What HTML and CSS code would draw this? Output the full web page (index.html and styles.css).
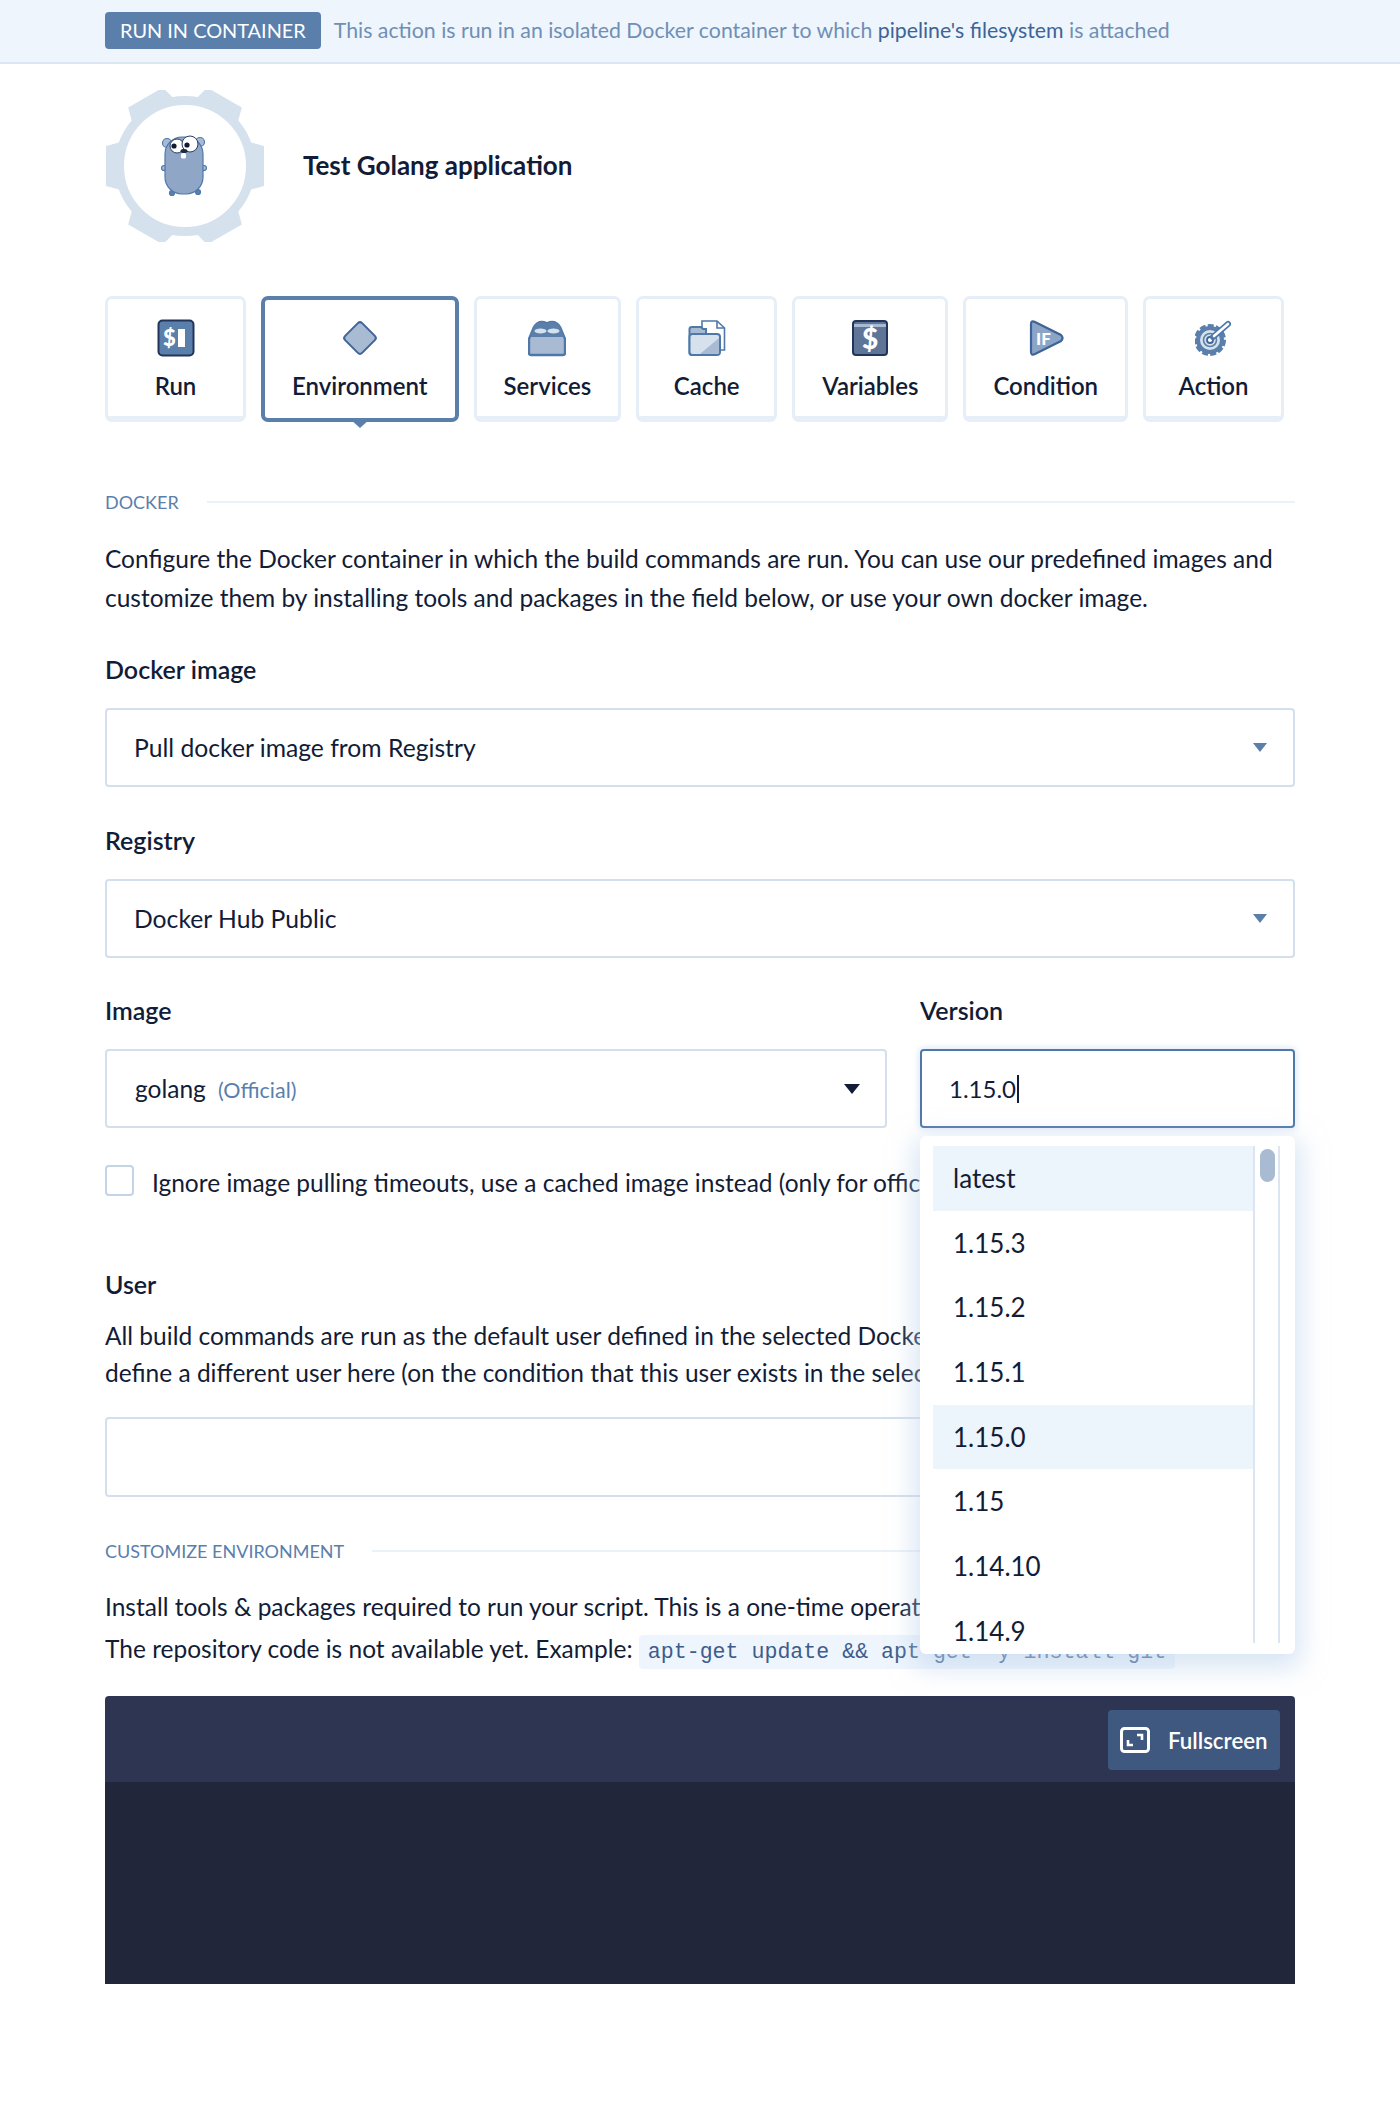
FILE: index.html
```html
<!DOCTYPE html>
<html lang="en">
<head>
<meta charset="utf-8">
<title>Test Golang application</title>
<link rel="stylesheet" href="styles.css">
</head>
<body>
<div class="notice">
  <span class="badge">RUN IN CONTAINER</span>
  <span class="notice-text">This action is run in an isolated Docker container to which <strong>pipeline's filesystem</strong> is attached</span>
</div>
<main class="page">
  <header class="head">
    <svg class="gear" viewBox="-80 -76 160 152" width="160" height="152" aria-hidden="true">
      <circle r="65.5" fill="none" stroke="#d5e1ed" stroke-width="9"/>
      <g fill="#d5e1ed">
        <polygon points="64,-24 79,-20 79,20 64,24"/>
        <polygon points="64,-24 79,-20 79,20 64,24" transform="rotate(60)"/>
        <polygon points="64,-24 79,-20 79,20 64,24" transform="rotate(120)"/>
        <polygon points="64,-24 79,-20 79,20 64,24" transform="rotate(180)"/>
        <polygon points="64,-24 79,-20 79,20 64,24" transform="rotate(240)"/>
        <polygon points="64,-24 79,-20 79,20 64,24" transform="rotate(300)"/>
      </g>
      <g stroke="#4f78aa" stroke-width="1.2">
        <circle cx="-18" cy="-23" r="4.5" fill="#a9bbd3"/>
        <circle cx="15" cy="-24" r="4.5" fill="#a9bbd3"/>
        <circle cx="-21" cy="2" r="2.5" fill="#a9bbd3"/>
        <circle cx="19" cy="2" r="2.5" fill="#a9bbd3"/>
        <circle cx="-13" cy="27" r="2.5" fill="#5a7fab"/>
        <circle cx="13" cy="26" r="2.5" fill="#5a7fab"/>
        <rect x="-20" y="-29" width="38" height="57" rx="17" fill="#8fa6c6"/>
      </g>
      <circle cx="-8" cy="-20" r="7" fill="#fff" stroke="#2b3d60" stroke-width="1"/>
      <circle cx="5" cy="-22" r="8" fill="#fff" stroke="#2b3d60" stroke-width="1"/>
      <circle cx="-11" cy="-20" r="2.6" fill="#0f1a30"/>
      <circle cx="2" cy="-21" r="2.6" fill="#0f1a30"/>
      <ellipse cx="-1" cy="-15" rx="3.5" ry="2" fill="#1c2a44"/>
      <rect x="-4" y="-13" width="5" height="5.5" rx="1.5" fill="#fff"/>
    </svg>
    <h1 class="title">Test Golang application</h1>
  </header>

  <nav class="tabs">
    <div class="tab">
      <svg class="tab-icon" viewBox="0 0 38 38" aria-hidden="true">
        <rect x="1.5" y="1.5" width="35" height="35" rx="4" fill="#5a7fab" stroke="#22345a" stroke-width="2"/>
        <text x="12.5" y="26.5" class="ico-t ico-dollar">$</text>
        <rect x="21" y="10" width="7" height="18" fill="#fff"/>
      </svg>
      <span>Run</span>
    </div>
    <div class="tab tab-active">
      <svg class="tab-icon" viewBox="0 0 38 38" aria-hidden="true">
        <rect x="7" y="7" width="24" height="24" rx="3" transform="rotate(45 19 19)" fill="#a9bbd3" stroke="#3f6497" stroke-width="2"/>
      </svg>
      <span>Environment</span>
    </div>
    <div class="tab">
      <svg class="tab-icon" viewBox="0 0 38 38" aria-hidden="true">
        <path d="M3 36 H35 Q37 36 37 34 V20 L32 8 Q29 3 24 3 Q20 3 19 5 Q18 3 14 3 Q9 3 6 8 L1 20 V34 Q1 36 3 36 Z" fill="#a9bbd3" stroke="#4f78aa" stroke-width="2.4"/>
        <path d="M2 18 L6 8 Q9 3 14 3 Q18 3 19 5 Q20 3 24 3 Q29 3 32 8 L36 18 Z" fill="#5a7fab"/>
        <ellipse cx="12.5" cy="12" rx="6" ry="2.6" fill="#d5e1ed"/>
        <ellipse cx="25.5" cy="12" rx="6" ry="2.6" fill="#d5e1ed"/>
      </svg>
      <span>Services</span>
    </div>
    <div class="tab">
      <svg class="tab-icon" viewBox="0 0 38 38" aria-hidden="true">
        <path d="M14 2 H29 L36.5 9 V31 H14 Z" fill="#fff" stroke="#4f78aa" stroke-width="1.6"/>
        <path d="M29 2 V9 H36.5" fill="none" stroke="#4f78aa" stroke-width="1.6"/>
        <path d="M1.5 10 Q1.5 8 4 8 H13 L15 10 H18 V36 H4 Q1.5 36 1.5 34 Z" fill="#a9bbd3" stroke="#4f78aa" stroke-width="2"/>
        <path d="M1.5 18 Q1.5 15 4.5 15 H29 Q32 15 32 18 V33 Q32 36 29 36 H4.5 Q1.5 36 1.5 33 Z" fill="#d5e1ed" stroke="#4f78aa" stroke-width="2"/>
        <path d="M12 35 L31 19 V33 Q31 35 29 35 Z" fill="#a9bbd3"/>
      </svg>
      <span>Cache</span>
    </div>
    <div class="tab">
      <svg class="tab-icon" viewBox="0 0 38 38" aria-hidden="true">
        <rect x="2" y="2" width="34" height="34" rx="3" fill="#5f7598" stroke="#22345a" stroke-width="2"/>
        <rect x="3" y="5" width="32" height="3" fill="#a9bbd3"/>
        <text x="19" y="30" class="ico-t ico-var">$</text>
      </svg>
      <span>Variables</span>
    </div>
    <div class="tab">
      <svg class="tab-icon" viewBox="0 0 38 38" aria-hidden="true">
        <path d="M4 5 Q4 1 8 3 L34 16 Q37 19 34 22 L8 35 Q4 37 4 33 Z" fill="#8ba5c7" stroke="#3f6497" stroke-width="2.2"/>
        <text x="9" y="25.5" class="ico-t ico-if">IF</text>
      </svg>
      <span>Condition</span>
    </div>
    <div class="tab">
      <svg class="tab-icon" viewBox="0 0 38 38" aria-hidden="true">
        <circle cx="15" cy="21" r="12" fill="#d5e1ed" stroke="#5a7fab" stroke-width="4"/>
        <circle cx="15" cy="21" r="14.5" fill="none" stroke="#5a7fab" stroke-width="3" stroke-dasharray="6 2.2"/>
        <circle cx="15" cy="21" r="6.5" fill="none" stroke="#5a7fab" stroke-width="1.6"/>
        <circle cx="15" cy="21" r="3" fill="#fff" stroke="#3f6497" stroke-width="1.8"/>
        <path d="M18 18 L33 5" stroke="#4f78aa" stroke-width="6" stroke-linecap="round"/>
        <path d="M19 17 L33 5" stroke="#fff" stroke-width="2.6" stroke-linecap="round"/>
      </svg>
      <span>Action</span>
    </div>
  </nav>

  <h2 class="section section-docker"><span>DOCKER</span></h2>
  <p class="text text-docker">Configure the Docker container in which the build commands are run. You can use our predefined images and<br>customize them by installing tools and packages in the field below, or use your own docker image.</p>

  <div class="label label-first">Docker image</div>
  <div class="field select"><span>Pull docker image from Registry</span><i class="caret"></i></div>

  <div class="label">Registry</div>
  <div class="field select"><span>Docker Hub Public</span><i class="caret"></i></div>

  <div class="split">
    <div class="split-main">
      <div class="label label-row">Image</div>
      <div class="field select image"><span>golang <em class="official">(Official)</em></span><i class="caret caret-dark"></i></div>
    </div>
    <div class="split-side">
      <div class="label label-row">Version</div>
      <div class="field version"><span>1.15.0</span><b class="cursor"></b></div>
      <div class="menu">
        <div class="menu-inner">
          <ul class="options">
            <li class="hl">latest</li>
            <li>1.15.3</li>
            <li>1.15.2</li>
            <li>1.15.1</li>
            <li class="hl">1.15.0</li>
            <li>1.15</li>
            <li>1.14.10</li>
            <li>1.14.9</li>
          </ul>
          <div class="track"><div class="thumb"></div></div>
        </div>
      </div>
    </div>
  </div>

  <label class="check"><span class="box"></span><span class="check-text">Ignore image pulling timeouts, use a cached image instead (only for official images)</span></label>

  <div class="label label-user">User</div>
  <p class="text text-user">All build commands are run as the default user defined in the selected Docker image. You can<br>define a different user here (on the condition that this user exists in the selected image).</p>
  <div class="field field-user"></div>

  <h2 class="section section-env"><span>CUSTOMIZE ENVIRONMENT</span></h2>
  <p class="text text-env">Install tools &amp; packages required to run your script. This is a one-time operation.</p>
  <p class="text text-env2">The repository code is not available yet. Example: <code class="code">apt-get update &amp;&amp; apt-get -y install git</code></p>

  <div class="editor">
    <div class="editor-head">
      <button class="full" type="button">
        <svg viewBox="0 0 30 26" width="30" height="26" aria-hidden="true">
          <rect x="1.5" y="1.5" width="27" height="23" rx="3" fill="none" stroke="#fff" stroke-width="3"/>
          <path d="M8 13 V18 H13 M22 13 V8 H17" fill="none" stroke="#fff" stroke-width="2.6"/>
        </svg>
        <span>Fullscreen</span>
      </button>
    </div>
    <div class="editor-body"></div>
  </div>
</main>
</body>
</html>
```

FILE: styles.css
```css
* { box-sizing: border-box; }
html, body { margin: 0; padding: 0; background: #fff; }
body {
  font-family: "Lato", "Liberation Sans", sans-serif;
  color: #121c36;
  font-size: 24.5px;
  height: 2117px;
  overflow: hidden;
}
.notice {
  height: 64px;
  display: flex;
  align-items: center;
  gap: 13px;
  padding: 0 105px 2px;
  background: #eef5fc;
  border-bottom: 2px solid #dbe6f2;
}
.badge {
  display: block;
  background: #5a7fab;
  color: #fff;
  font-size: 19.9px;
  line-height: 37px;
  padding: 0 15px;
  border-radius: 4px;
  white-space: nowrap;
}
.notice-text { color: #6f8fb6; font-size: 21.3px; white-space: nowrap; }
.notice-text strong { font-weight: 400; color: #3d6498; }
.page { padding: 0 105px; }
.head { display: flex; align-items: center; gap: 38px; padding-top: 26px; }
.gear { display: block; flex: none; }
.title { margin: 0; font-size: 26px; font-weight: 700; line-height: 32px; position: relative; top: -1px; }
.tabs { display: flex; gap: 15px; margin-top: 54px; }
.tab {
  height: 126px;
  min-width: 141px;
  padding: 20px 27px 0;
  border: 3px solid #e6eef7;
  border-bottom-width: 6px;
  border-radius: 7px;
  display: flex;
  flex-direction: column;
  align-items: center;
  font-weight: 600;
  font-size: 24px;
  white-space: nowrap;
  position: relative;
}
.tab-active { border: 4px solid #5a7fab; padding-top: 19px; }
.tab-active::after {
  content: "";
  position: absolute;
  left: 50%;
  bottom: -10px;
  margin-left: -11px;
  border-left: 11px solid transparent;
  border-right: 11px solid transparent;
  border-top: 10px solid #5a7fab;
}
.tab-icon { width: 38px; height: 38px; display: block; margin-bottom: 14px; }
.ico-t { fill: #fff; font-family: "Lato", sans-serif; font-weight: 900; }
.ico-dollar { font-size: 22px; text-anchor: middle; }
.ico-var { font-size: 28px; text-anchor: middle; }
.ico-if { font-size: 17px; }
.section {
  display: flex;
  align-items: center;
  gap: 28px;
  margin: 0;
  color: #5a7fab;
  font-size: 18px;
  font-weight: 400;
  line-height: 20px;
}
.section::after { content: ""; flex: 1; height: 2px; background: #eaf1f9; }
.section-docker { margin-top: 70px; }
.section-env { margin-top: 44px; }
.text { margin: 0; white-space: nowrap; }
.text-docker { margin-top: 27px; line-height: 39px; }
.text-user { margin-top: 18px; line-height: 37px; }
.text-env { margin-top: 26px; line-height: 40px; }
.text-env2 { margin-top: 0; line-height: 44px; }
.label { font-weight: 600; line-height: 30px; margin-top: 38px; margin-bottom: 24px; font-size: 25px; }
.label-first { margin-top: 37px; }
.label-row { margin-top: 37px; }
.field {
  height: 79px;
  border: 2px solid #d3dfed;
  border-radius: 4px;
  background: #fff;
  display: flex;
  align-items: center;
  padding: 0 26px 0 27px;
  font-size: 24.7px;
}
.select { justify-content: space-between; }
.caret {
  width: 0;
  height: 0;
  border-left: 7px solid transparent;
  border-right: 7px solid transparent;
  border-top: 9px solid #5a7fab;
}
.caret-dark { border-left-width: 8px; border-right-width: 8px; border-top: 10px solid #121c36; margin-right: -1px; }
.split { display: flex; gap: 33px; }
.split-main { flex: none; width: 782px; }
.split-side { flex: 1; position: relative; }
.image { font-size: 24.5px; padding-left: 28px; }
.official { font-style: normal; font-size: 21.5px; color: #5a7fab; margin-left: 6px; }
.version {
  border-color: #4f78aa;
  box-shadow: 0 0 6px 2px #e3ecf6;
  padding-left: 27px;
  font-size: 24px;
}
.cursor { width: 2px; height: 28px; background: #121c36; margin-left: 1px; }
.menu {
  position: absolute;
  left: 0;
  top: 178px;
  width: 375px;
  height: 518px;
  background: #fff;
  border-radius: 6px;
  box-shadow: 0 8px 26px 6px rgba(190, 211, 236, 0.6);
  padding: 10px 15px 11px 13px;
  z-index: 5;
}
.menu-inner { display: flex; height: 100%; overflow: hidden; }
.options { list-style: none; margin: 0; padding: 0; flex: 1; }
.options li {
  height: 64.7px;
  line-height: 64px;
  padding-left: 20px;
  font-size: 26px;
}
.options .hl { background: #ecf4fc; }
.track {
  flex: none;
  width: 27px;
  border-left: 2px solid #dbe6f2;
  border-right: 2px solid #dbe6f2;
  padding: 3px 5px;
}
.thumb { width: 15px; height: 33px; border-radius: 8px; background: #a9bbd3; }
.check { display: flex; align-items: center; gap: 18px; margin-top: 37px; height: 31px; white-space: nowrap; }
.check-text { padding-top: 3px; }
.box { width: 29px; height: 31px; flex: none; border: 2px solid #c4d3e6; border-radius: 4px; }
.label-user { margin-top: 73px; margin-bottom: 0; }
.field-user { margin-top: 26px; height: 80px; }
.code {
  font-family: "Liberation Mono", "DejaVu Sans Mono", monospace;
  font-size: 21.6px;
  color: #3d5c8c;
  background: #eef5fc;
  padding: 5px 9px;
  border-radius: 4px;
}
.editor { margin-top: 22px; height: 288px; border-radius: 4px 4px 0 0; overflow: hidden; display: flex; flex-direction: column; }
.editor-head {
  height: 86px;
  background: #2e3553;
  display: flex;
  justify-content: flex-end;
  align-items: flex-start;
  padding: 14px 15px 0 0;
}
.editor-body { flex: 1; background: #22263a; }
.full {
  height: 60px;
  width: 172px;
  display: flex;
  align-items: center;
  gap: 18px;
  padding: 0 0 0 12px;
  border: 0;
  border-radius: 4px;
  background: #3f5880;
  color: #fff;
  font-family: "Lato", sans-serif;
  font-size: 22.3px;
  font-weight: 600;
}
```
